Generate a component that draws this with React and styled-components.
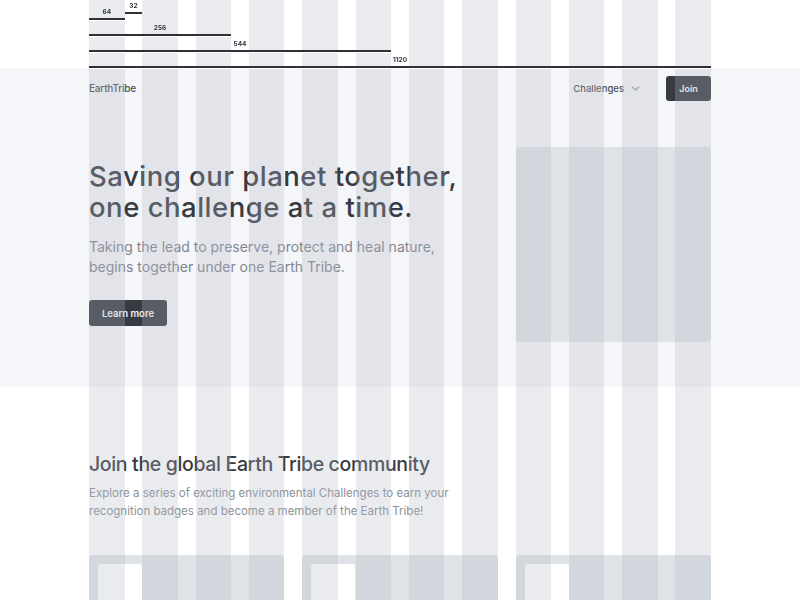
import React from 'react';
import styled, { createGlobalStyle } from 'styled-components';
import { ChevronDown } from 'lucide-react';

const GlobalStyle = createGlobalStyle`
  html, body {
    margin: 0;
    padding: 0;
    background: #ffffff;
  }
  body {
    font-family: Inter, "Liberation Sans", sans-serif;
    color: #373a40;
  }
`;

const COL = 35.53;
const GAP = 17.78;
const span = (n) => n * COL + (n - 1) * GAP;

const Container = styled.div`
  width: 622px;
  margin: 0 auto;
`;

/* column overlay */
const Overlay = styled.div`
  position: fixed;
  inset: 0;
  pointer-events: none;
  z-index: 10;
`;

const OverlayGrid = styled(Container)`
  height: 100%;
  display: grid;
  grid-template-columns: repeat(12, 1fr);
  column-gap: ${GAP}px;
`;

const OverlayCol = styled.div`
  background: rgba(175, 182, 198, 0.28);
`;

/* rulers */
const Rulers = styled(Container)`
  position: relative;
  z-index: 20;
  padding-top: 1px;
`;

const RulerRow = styled.div`
  display: flex;
  align-items: flex-start;
  margin-top: ${(p) => (p.$first ? 0 : 3)}px;
`;

const RulerItem = styled.div`
  width: ${(p) => p.$w}px;
  display: flex;
  flex-direction: column;
  align-items: center;
  margin-top: ${(p) => p.$drop || 0}px;
`;

const RulerLabel = styled.span`
  font-size: 6.5px;
  font-weight: 700;
  line-height: 11px;
  color: #34373c;
`;

const RulerLine = styled.div`
  align-self: stretch;
  height: 2px;
  background: #2e3136;
  box-shadow: 0 1px 0 #ffffff;
`;

/* hero */
const Hero = styled.section`
  background: #f5f6f9;
`;

const Nav = styled(Container)`
  height: 40px;
  display: flex;
  align-items: center;
  justify-content: space-between;
`;

const Brand = styled.span`
  font-size: 10px;
  font-weight: 500;
  color: #4a4e55;
  letter-spacing: -0.2px;
`;

const NavRight = styled.div`
  display: flex;
  align-items: center;
  gap: 24px;
`;

const NavLink = styled.span`
  display: flex;
  align-items: center;
  gap: 5px;
  font-size: 9.5px;
  font-weight: 500;
  color: #4a4e55;
`;

const Button = styled.button`
  border: none;
  border-radius: 3px;
  background: #373a40;
  color: #f4f5f7;
  font-family: inherit;
  font-weight: 600;
  font-size: ${(p) => (p.$small ? 9 : 9.5)}px;
  width: ${(p) => p.$w}px;
  height: ${(p) => p.$h}px;
  padding: 0;
  cursor: pointer;
`;

const HeroBody = styled(Container)`
  display: grid;
  grid-template-columns: 1fr ${span(4)}px;
  column-gap: ${GAP}px;
  padding: 39px 0 45px;
`;

const HeroText = styled.div`
  padding-top: 14px;
`;

const Title = styled.h1`
  margin: 0;
  font-size: 27.5px;
  line-height: 31px;
  font-weight: 500;
  letter-spacing: 0.5px;
  color: #373a40;
`;

const Lead = styled.p`
  margin: 14px 0 23px;
  font-size: 14px;
  line-height: 20px;
  color: #80858d;
`;

const Placeholder = styled.div`
  height: 195px;
  border-radius: 4px;
  background: #dfe2e6;
`;

/* community */
const Section = styled(Container)`
  padding-top: 65px;
`;

const SectionTitle = styled.h2`
  margin: 0;
  font-size: 19.5px;
  line-height: 24px;
  font-weight: 500;
  letter-spacing: -0.35px;
  color: #373a40;
`;

const SectionText = styled.p`
  margin: 8px 0 35px;
  font-size: 11.5px;
  line-height: 18px;
  color: #8b9097;
`;

const Cards = styled.div`
  display: grid;
  grid-template-columns: repeat(3, 1fr);
  column-gap: ${GAP}px;
`;

const Card = styled.div`
  height: 200px;
  border-radius: 4px;
  background: #dfe2e6;
  padding: 9px;
  box-sizing: border-box;
`;

const Thumb = styled.div`
  width: 44px;
  height: 60px;
  border-radius: 3px;
  background: #ffffff;
`;

export default function App() {
  return (
    <>
      <GlobalStyle />
      <Overlay>
        <OverlayGrid>
          {Array.from({ length: 12 }).map((_, i) => (
            <OverlayCol key={i} />
          ))}
        </OverlayGrid>
      </Overlay>

      <Rulers>
        <RulerRow $first>
          <RulerItem $w={span(1)} $drop={6}>
            <RulerLabel>64</RulerLabel>
            <RulerLine />
          </RulerItem>
          <RulerItem $w={GAP}>
            <RulerLabel>32</RulerLabel>
            <RulerLine />
          </RulerItem>
        </RulerRow>
        <RulerRow>
          <RulerItem $w={span(3)}>
            <RulerLabel>256</RulerLabel>
            <RulerLine />
          </RulerItem>
        </RulerRow>
        <RulerRow>
          <RulerItem $w={span(6)}>
            <RulerLabel>544</RulerLabel>
            <RulerLine />
          </RulerItem>
        </RulerRow>
        <RulerRow>
          <RulerItem $w={622}>
            <RulerLabel>1120</RulerLabel>
            <RulerLine />
          </RulerItem>
        </RulerRow>
      </Rulers>

      <Hero>
        <Nav>
          <Brand>EarthTribe</Brand>
          <NavRight>
            <NavLink>
              Challenges
              <ChevronDown size={13} strokeWidth={1.7} color="#4a4e55" />
            </NavLink>
            <Button $small $w={45} $h={25}>Join</Button>
          </NavRight>
        </Nav>
        <HeroBody>
          <HeroText>
            <Title>
              Saving our planet together,
              <br />
              one challenge at a time.
            </Title>
            <Lead>
              Taking the lead to preserve, protect and heal nature,
              <br />
              begins together under one Earth Tribe.
            </Lead>
            <Button $w={78} $h={26}>Learn more</Button>
          </HeroText>
          <Placeholder />
        </HeroBody>
      </Hero>

      <Section>
        <SectionTitle>Join the global Earth Tribe community</SectionTitle>
        <SectionText>
          Explore a series of exciting environmental Challenges to earn your
          <br />
          recognition badges and become a member of the Earth Tribe!
        </SectionText>
        <Cards>
          {[0, 1, 2].map((i) => (
            <Card key={i}>
              <Thumb />
            </Card>
          ))}
        </Cards>
      </Section>
    </>
  );
}
